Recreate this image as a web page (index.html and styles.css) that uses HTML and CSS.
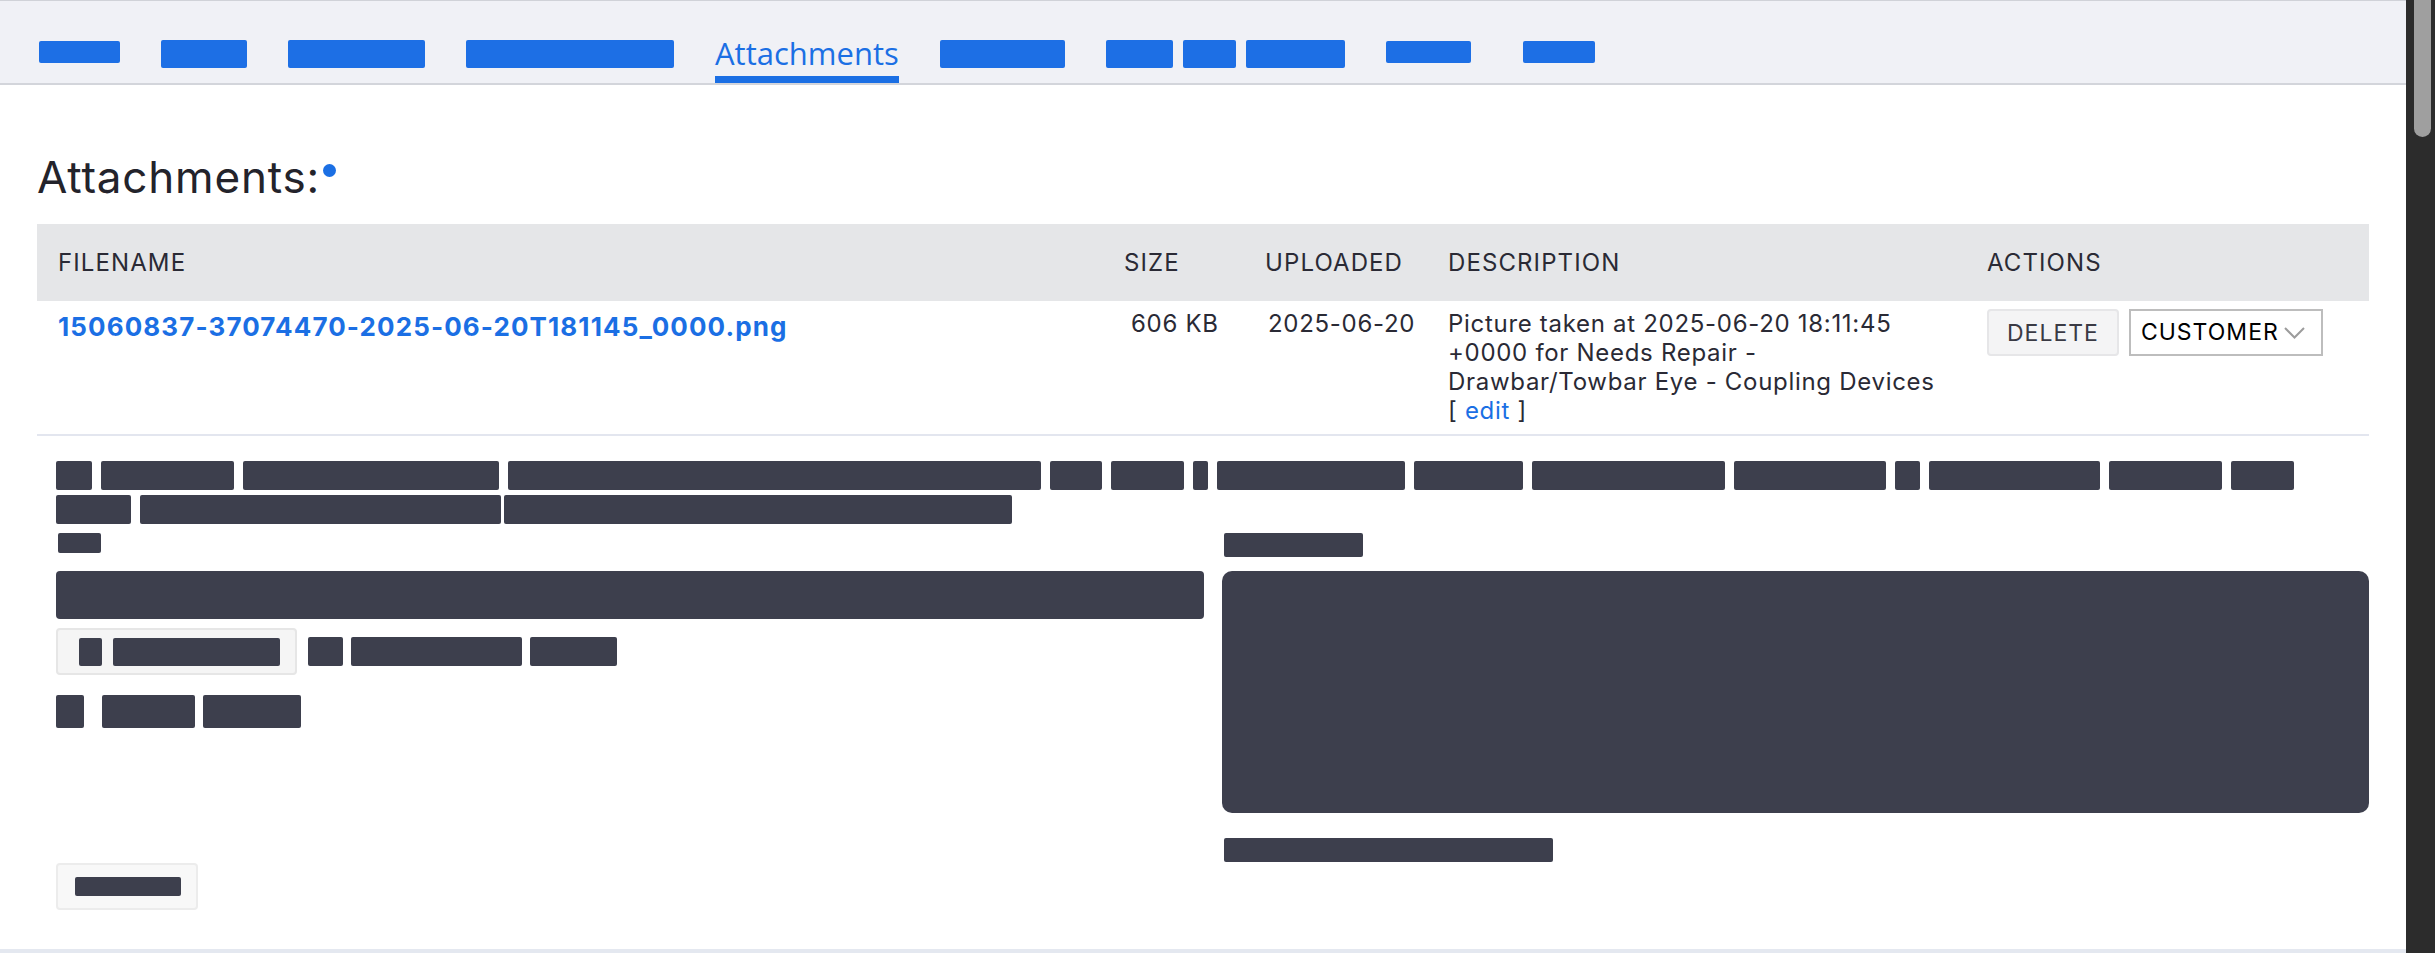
FILE: index.html
```html
<!DOCTYPE html>
<html lang="en">
<head>
    <meta charset="UTF-8">
    <meta name="viewport" content="width=device-width, initial-scale=1.0">
    <title>Attachments</title>
    <link rel="stylesheet" href="styles.css">
</head>
<body>
    <div class="window">
        <div class="page">
            <!-- record tabs, labels hidden behind bars -->
            <nav class="tabs">
                <a class="tab"><span class="bar sm" style="width:81px"></span></a>
                <a class="tab"><span class="bar" style="width:86px"></span></a>
                <a class="tab"><span class="bar" style="width:137px"></span></a>
                <a class="tab"><span class="bar" style="width:208px"></span></a>
                <a class="tab active">Attachments</a>
                <a class="tab"><span class="bar" style="width:125px"></span></a>
                <a class="tab"><span class="bar" style="width:67px"></span><span class="bar" style="width:53px"></span><span class="bar" style="width:99px"></span></a>
                <a class="tab"><span class="bar sm" style="width:85px"></span></a>
                <a class="tab tab-end"><span class="bar sm" style="width:72px"></span></a>
            </nav>

            <main class="content">
                <h2 class="title">Attachments:<span class="req"></span></h2>

                <table class="files">
                    <colgroup>
                        <col style="width:1066px">
                        <col style="width:141px">
                        <col style="width:183px">
                        <col style="width:539px">
                        <col>
                    </colgroup>
                    <thead>
                        <tr>
                            <th>FILENAME</th>
                            <th>SIZE</th>
                            <th>UPLOADED</th>
                            <th>DESCRIPTION</th>
                            <th>ACTIONS</th>
                        </tr>
                    </thead>
                    <tbody>
                        <tr>
                            <td><a class="file-link" href="#">15060837-37074470-2025-06-20T181145_0000.png</a></td>
                            <td class="size">606 KB</td>
                            <td class="date">2025-06-20</td>
                            <td>Picture taken at 2025-06-20 18:11:45<br>+0000 for Needs Repair -<br>Drawbar/Towbar Eye - Coupling Devices<br>[ <a class="edit" href="#">edit</a> ]</td>
                            <td>
                                <div class="actions">
                                    <button class="btn-delete">DELETE</button>
                                    <div class="select">
                                        <span>CUSTOMER</span>
                                        <svg width="21" height="12" viewBox="0 0 21 12"><path d="M1 1l9.5 9.5L20 1" fill="none" stroke="#9c9c9c" stroke-width="2"/></svg>
                                    </div>
                                </div>
                            </td>
                        </tr>
                    </tbody>
                </table>

                <section class="details">
                    <p class="notice">
                        <span class="blk" style="width:36px"></span>
                        <span class="blk" style="width:133px"></span>
                        <span class="blk" style="width:256px"></span>
                        <span class="blk" style="width:533px"></span>
                        <span class="blk" style="width:52px"></span>
                        <span class="blk" style="width:73px"></span>
                        <span class="blk" style="width:15px"></span>
                        <span class="blk" style="width:188px"></span>
                        <span class="blk" style="width:109px"></span>
                        <span class="blk" style="width:193px"></span>
                        <span class="blk" style="width:152px"></span>
                        <span class="blk" style="width:25px"></span>
                        <span class="blk" style="width:171px"></span>
                        <span class="blk" style="width:113px"></span>
                        <span class="blk" style="width:63px"></span>
                        <span class="blk" style="width:75px"></span>
                        <span class="blk" style="width:361px"></span>
                        <span class="blk joined" style="width:508px"></span>
                    </p>

                    <div class="cols">
                        <div class="col">
                            <span class="blk label" style="width:43px"></span>
                            <div class="field"></div>
                            <div class="line">
                                <button class="btn-light">
                                    <span class="blk" style="width:23px"></span>
                                    <span class="blk" style="width:167px"></span>
                                </button>
                                <span class="blk" style="width:35px"></span>
                                <span class="blk" style="width:171px"></span>
                                <span class="blk" style="width:87px"></span>
                            </div>
                            <div class="line tall">
                                <span class="blk" style="width:28px"></span>
                                <span class="blk gap-wide" style="width:93px"></span>
                                <span class="blk" style="width:98px"></span>
                            </div>
                            <button class="btn-light btn-small">
                                <span class="blk" style="width:106px"></span>
                            </button>
                        </div>
                        <div class="col">
                            <span class="blk label-lg" style="width:139px"></span>
                            <div class="preview"></div>
                            <span class="blk caption" style="width:329px"></span>
                        </div>
                    </div>
                </section>
            </main>

            <div class="next-panel"></div>
        </div>

        <div class="scrollbar"><div class="thumb"></div></div>
    </div>
</body>
</html>
```

FILE: styles.css
```css
body {
    margin: 0;
    font-family: Inter, "Noto Sans", sans-serif;
    color: #2a2a35;
    background-color: #fff;
    overflow: hidden;
}
.window {
    display: flex;
    height: 100vh;
}
.page {
    flex: 1;
    display: flex;
    flex-direction: column;
    min-width: 0;
}

/* tab strip */
.tabs {
    display: flex;
    gap: 41px;
    height: 85px;
    box-sizing: border-box;
    padding-left: 39px;
    background-color: #f0f1f6;
    border-top: 1px solid #d0d2d8;
    border-bottom: 2px solid #d3d5db;
}
.tab {
    display: flex;
    gap: 10px;
    align-items: flex-start;
    padding-top: 39px;
    box-sizing: border-box;
    height: 82px;
    font-family: "Open Sans", sans-serif;
    font-size: 31px;
    line-height: 30px;
    color: #1b6fe4;
    text-decoration: none;
}
.tab.active {
    padding-top: 37px;
    border-bottom: 7px solid #1b6fe4;
}
.tab-end {
    margin-left: 11px;
}
.bar {
    display: block;
    height: 28px;
    border-radius: 2px;
    background-color: #1d6fe5;
}
.bar.sm {
    height: 22px;
    margin-top: 1px;
}

/* main area */
.content {
    flex: 1;
    padding: 0 37px;
}
.title {
    margin: 65px 0 24px;
    font-size: 44px;
    line-height: 50px;
    height: 50px;
    font-weight: 400;
    letter-spacing: 0.8px;
    color: #23232b;
}
.req {
    display: inline-block;
    width: 13px;
    height: 13px;
    margin: 14px 0 0 3px;
    vertical-align: text-top;
    border-radius: 50%;
    background-color: #1b6fe4;
}

.files {
    width: 100%;
    table-layout: fixed;
    border-collapse: collapse;
    font-size: 24px;
    line-height: 29px;
    letter-spacing: 0.7px;
}
.files th {
    height: 77px;
    padding: 0 21px;
    text-align: left;
    font-weight: 400;
    letter-spacing: 1.1px;
    background-color: #e5e6e8;
}
.files td {
    padding: 8px 21px 9px;
    vertical-align: top;
    border-bottom: 2px solid #e3e6ef;
}
.files td.size {
    padding-left: 28px;
}
.files td.date {
    padding-left: 24px;
    white-space: nowrap;
}
.file-link {
    display: inline-block;
    padding-top: 3px;
    font-size: 26px;
    font-weight: 700;
    letter-spacing: 1.1px;
    color: #1b6fe4;
    text-decoration: none;
    white-space: nowrap;
}
.edit {
    color: #1b6fe4;
    text-decoration: none;
}
.actions {
    display: flex;
    gap: 10px;
}
.btn-delete {
    height: 47px;
    padding: 0 18px;
    font-family: inherit;
    font-size: 23px;
    letter-spacing: 1px;
    color: #3a3a44;
    background-color: #f4f4f5;
    border: 2px solid #e6e6e8;
    border-radius: 4px;
}
.select {
    display: flex;
    align-items: center;
    gap: 5px;
    width: 194px;
    height: 47px;
    box-sizing: border-box;
    padding-left: 10px;
    font-size: 23px;
    letter-spacing: 1px;
    color: #000;
    border: 2px solid #bdbdbd;
}

/* redacted details block */
.details {
    padding-left: 19px;
}
.blk {
    display: inline-block;
    height: 29px;
    border-radius: 2px;
    background-color: #3d3f4d;
}
.notice {
    display: flex;
    flex-wrap: wrap;
    column-gap: 9px;
    row-gap: 5px;
    margin: 25px 0 0;
}
.notice .joined {
    margin-left: -6px;
}
.cols {
    display: grid;
    grid-template-columns: 1fr 1fr;
    column-gap: 18px;
    margin-top: 9px;
}
.col {
    display: flex;
    flex-direction: column;
    align-items: flex-start;
}
.label {
    height: 20px;
    margin-left: 2px;
}
.label-lg {
    height: 24px;
    margin-left: 2px;
}
.field {
    align-self: stretch;
    height: 48px;
    margin-top: 18px;
    border-radius: 4px;
    background-color: #3d3f4d;
}
.line {
    display: flex;
    align-items: center;
    gap: 8px;
    margin-top: 9px;
}
.line > .btn-light + .blk {
    margin-left: 3px;
}
.line.tall {
    margin-top: 20px;
}
.line.tall .blk {
    height: 33px;
}
.line .gap-wide {
    margin-left: 10px;
}
.btn-light {
    display: flex;
    align-items: center;
    gap: 11px;
    height: 47px;
    padding: 0 15px 0 21px;
    background-color: #f5f5f5;
    border: 2px solid #e6e6e6;
    border-radius: 4px;
}
.btn-light .blk {
    height: 28px;
}
.btn-small {
    width: 142px;
    margin-top: 135px;
    padding: 0 0 0 17px;
    background-color: #f8f8f8;
    border-color: #ececec;
}
.btn-small .blk {
    height: 19px;
}
.preview {
    align-self: stretch;
    height: 242px;
    margin-top: 14px;
    border-radius: 10px;
    background-color: #3d3f4d;
}
.caption {
    height: 24px;
    margin: 25px 0 0 2px;
}
.next-panel {
    height: 4px;
    background-color: #e4e8f0;
}

/* page scrollbar */
.scrollbar {
    width: 29px;
    flex-shrink: 0;
    background-color: #2c2c2c;
}
.thumb {
    width: 17px;
    height: 137px;
    margin-left: 8px;
    border-radius: 0 0 9px 9px;
    background-color: #9f9f9f;
}
```
